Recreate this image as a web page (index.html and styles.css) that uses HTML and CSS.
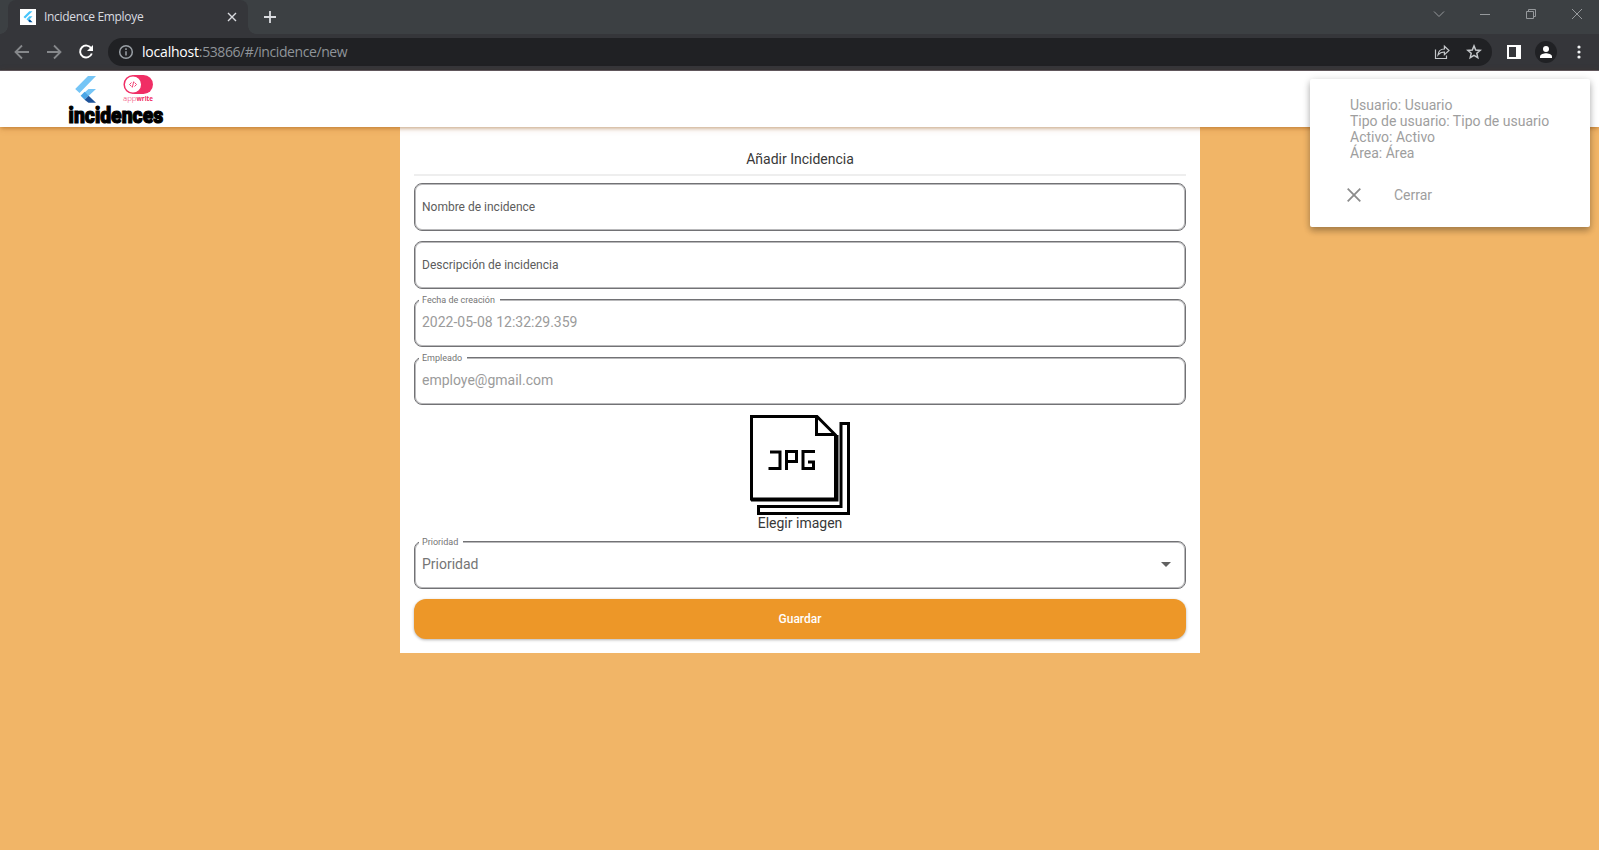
FILE: index.html
```html
<!DOCTYPE html>
<html lang="es">
<head>
<meta charset="utf-8">
<title>Incidence Employe</title>
<link rel="stylesheet" href="styles.css">
</head>
<body>
<div class="browser">
  <div class="tabbar">
    <div class="tab">
      <svg class="favicon" viewBox="0 0 16 16"><path fill="#fff" d="M0 0h16v16H0z"/><path fill="#47c5fb" d="M9.3 2.2h3.2L5.1 9.6 3.5 8zM9.3 7.3h3.2L9.6 10.3 8 8.6z"/><path fill="#47c5fb" d="M6.5 10.2 8.1 8.6l1.6 1.6-1.6 1.6z"/><path fill="#00569e" d="m8.1 11.8 1.6-1.6 2.9 3.1H9.5z"/></svg>
      <span class="tab-title">Incidence Employe</span>
      <svg class="tab-close" viewBox="0 0 10 10"><path d="m1 1 8 8M9 1 1 9"/></svg>
    </div>
    <svg class="new-tab" viewBox="0 0 14 14"><path d="M7 1v12M1 7h12"/></svg>
    <div class="window-buttons">
      <svg viewBox="0 0 12 12"><path d="m1 3.500 5 5 5-5"/></svg>
      <svg viewBox="0 0 12 12"><path d="M1 6.500h10"/></svg>
      <svg viewBox="0 0 12 12"><path d="M1.500 3.500h7v7h-7zM3.500 3.500v-2h7v7h-2"/></svg>
      <svg viewBox="0 0 12 12"><path d="m1 1 10 10M11 1 1 11"/></svg>
    </div>
  </div>
  <div class="toolbar">
    <svg class="nav dim" viewBox="0 0 16 16"><path d="M15 8H2M8 1.500 1.500 8 8 14.500"/></svg>
    <svg class="nav dim" viewBox="0 0 16 16"><path d="M1 8h13M8 1.500 14.500 8 8 14.500"/></svg>
    <svg class="nav" viewBox="0 0 16 16"><path d="M13.300 4.500A6 6 0 1 0 13.800 9.500"/><path class="solid" d="M15 1v6H9z"/></svg>
    <div class="address">
      <svg class="info" viewBox="0 0 16 16"><circle cx="8" cy="8" r="6.300"/><path d="M8 7.200v4.300M8 4.300v1.600"/></svg>
      <span class="url"><b>localhost</b>:53866/#/incidence/new</span>
      <svg class="share" viewBox="0 0 16 16"><path d="M1.500 5.500v9h11v-3M4 11c.4-4 2.800-6 6.400-6V2.200L15 6.500l-4.600 4.200V8C7.500 8 5.500 9 4 11z"/></svg>
      <svg class="star" viewBox="0 0 16 16"><path d="m8 1.900 1.700 4.100 4.500.4-3.400 2.900 1 4.400L8 11.400l-3.800 2.300 1-4.400-3.400-2.900L6.300 6z"/></svg>
    </div>
    <svg class="panel" viewBox="0 0 14 14"><path d="M0 0h14v14H0zM2 2v10h7V2z"/></svg>
    <svg class="profile" viewBox="0 0 22 22"><circle cx="11" cy="11" r="11" fill="#202124"/><circle cx="11" cy="8" r="3" fill="#fff"/><path fill="#fff" d="M5 17v-1.500C5 13 9 12.200 11 12.200s6 .8 6 3.300V17z"/></svg>
    <svg class="dots" viewBox="0 0 4 14"><circle cx="2" cy="2" r="1.600"/><circle cx="2" cy="7" r="1.600"/><circle cx="2" cy="12" r="1.600"/></svg>
  </div>
</div>

<header class="appbar">
  <svg class="logo" viewBox="0 0 100 56" role="img">
    <path fill="#75c5f6" d="M21 5h8L12.500 22l-4.300-4zM21.500 18H29l-7.500 7-4.500-3z"/>
    <path fill="#4aa5e6" d="m13.600 24.700 4-4 4 4-4 4z"/>
    <path fill="#1d5299" d="m17.600 28.700 4-4 7.400 7h-7.500z"/>
    <path fill="#f02e65" d="M66.500 4H76.500a9.500 9.500 0 0 1 0 19h-10z"/>
    <circle cx="66" cy="13.500" r="8.800" fill="#fff" stroke="#f02e65" stroke-width="1.500"/>
    <path fill="none" stroke="#f02e65" stroke-width=".9" d="m64.500 11.500-2 2 2 2m3-4 2 2-2 2m-.8-5-1.400 6"/>
    <text class="appwrite thin" x="56" y="30.300" textLength="13.500" lengthAdjust="spacingAndGlyphs">app</text>
    <text class="appwrite" x="69.500" y="30.300" textLength="16.500" lengthAdjust="spacingAndGlyphs">write</text>
    <text class="brand" x="1.600" y="51.600" textLength="94.500" lengthAdjust="spacingAndGlyphs">incidences</text>
  </svg>
</header>

<main class="card">
  <h1 class="title">Añadir Incidencia</h1>
  <form class="form">
    <div class="field"><span class="placeholder">Nombre de incidence</span></div>
    <div class="field"><span class="placeholder">Descripción de incidencia</span></div>
    <div class="field"><label class="floating">Fecha de creación</label><span class="value">2022-05-08 12:32:29.359</span></div>
    <div class="field"><label class="floating">Empleado</label><span class="value">employe@gmail.com</span></div>
    <div class="picker">
      <svg class="jpg" viewBox="0 0 100 100">
        <path d="M1.500 1.500H67L85.500 20v64h-84zM66.500 2v17.500h18"/>
        <path d="M1 85h86v-65"/>
        <path d="M91 8.500h7.500v90h-90v-7H91z"/>
        <path d="M20 37H30v16.500H18.500M36.500 55V36.500H46.500v10h-10M65 36.500H53v17h10.500V47H58"/>
      </svg>
      <span>Elegir imagen</span>
    </div>
    <div class="field"><label class="floating">Prioridad</label><span class="value select">Prioridad</span><i class="arrow"></i></div>
    <button class="save" type="button">Guardar</button>
  </form>
</main>

<aside class="menu">
  <div class="menu-info">Usuario: Usuario<br>Tipo de usuario: Tipo de usuario<br>Activo: Activo<br>Área: Área</div>
  <div class="menu-close"><svg viewBox="0 0 14 14"><path d="m.7.700 12.600 12.600M13.300.700.700 13.300"/></svg><span>Cerrar</span></div>
</aside>
</body>
</html>
```
FILE: styles.css
```css
* { box-sizing: border-box; }
html, body { margin: 0; height: 850px; overflow: hidden; }
body { background: #f1b567; font-family: Roboto, sans-serif; font-size: 14px; line-height: 16px; color: #383838; }
svg { display: block; flex: none; }

.browser { height: 71px; background: #35363a; border-bottom: 1px solid #5d5962; font-family: "Open Sans", sans-serif; }
.tabbar { height: 34px; background: #3c4043; display: flex; align-items: center; padding-left: 8px; }
.tab { position: relative; width: 240px; height: 34px; background: #35363a; border-radius: 8px 8px 0 0; display: flex; align-items: center; padding: 0 11px 0 12px; }
.tab::before, .tab::after { content: ""; position: absolute; bottom: 0; width: 8px; height: 8px; }
.tab::before { left: -8px; background: radial-gradient(circle at 0 0, #3c4043 7.5px, #35363a 8px); }
.tab::after { right: -8px; background: radial-gradient(circle at 100% 0, #3c4043 7.5px, #35363a 8px); }
.favicon { width: 16px; height: 16px; }
.tab-title { flex: 1; margin-left: 8px; color: #dadce0; font-size: 12px; letter-spacing: -.31px; }
.tab-close { width: 10px; height: 10px; fill: none; stroke: #dadce0; stroke-width: 1.4; }
.new-tab { width: 14px; height: 14px; margin-left: 15px; fill: none; stroke: #dadce0; stroke-width: 1.8; }
.window-buttons { margin-left: auto; display: flex; gap: 34px; padding: 0 16px 6px 0; }
.window-buttons svg { width: 12px; height: 12px; fill: none; stroke: #96999c; stroke-width: 1; }

.toolbar { height: 36px; display: flex; align-items: center; padding: 0 18px 0 14px; }
.nav { width: 16px; height: 16px; margin-right: 16px; fill: none; stroke: #fff; stroke-width: 1.9; }
.nav.dim { stroke: #86888b; stroke-width: 1.8; }
.nav .solid { fill: #fff; stroke: none; }
.address { height: 28px; width: 1384px; margin-left: -2px; border-radius: 14px; background: #202124; display: flex; align-items: center; padding: 0 10px 0 10px; }
.info { width: 16px; height: 16px; fill: none; stroke: #9aa0a6; stroke-width: 1.5; }
.url { flex: 1; margin-left: 8px; font-size: 14px; color: #8f9499; letter-spacing: -.41px; }
.url b { font-weight: 400; color: #fff; letter-spacing: -.2px; }
.share, .star { width: 16px; height: 16px; fill: none; stroke: #c4c7ca; stroke-width: 1.2; }
.share { margin-right: 16px; }
.star { stroke-width: 1.5; }
.panel { width: 14px; height: 14px; margin-left: 15px; fill: #fff; fill-rule: evenodd; }
.profile { width: 22px; height: 22px; margin-left: 14px; }
.dots { width: 4px; height: 14px; margin-left: auto; fill: #f1f3f4; }

.appbar { position: relative; height: 56px; background: #fff; padding-left: 67px; box-shadow: 0 2px 4px -1px rgba(143,70,0,.45), 0 1px 8px rgba(143,70,0,.15); }
.logo { width: 100px; height: 56px; overflow: visible; }
.brand { font: 900 22.500px Roboto, sans-serif; fill: #000; stroke: #000; stroke-width: 1.2; }
.appwrite { font: 700 6.500px "Open Sans", sans-serif; fill: #f02e65; }
.appwrite.thin { font-weight: 300; }

.card { width: 800px; height: 526px; margin: 0 auto 0 400px; padding: 24px 14px 14px; background: #fff; }
.title { margin: 0; height: 25px; border-bottom: 2px solid #eee; font-size: 14px; font-weight: 400; line-height: 16px; text-align: center; }
.form { display: flex; flex-direction: column; gap: 10px; margin-top: 7px; }
.field { position: relative; height: 48px; border: 1px solid #727275; border-radius: 8px; box-shadow: inset 0 0 0 1px #b9b9bb; display: flex; align-items: center; padding: 0 7px 2px; }
.placeholder { font-size: 12px; color: #5c5c5c; padding-top: 2px; }
.value { color: #9b9b9b; }
.value.select { color: #757575; }
.floating { position: absolute; top: -5px; left: 4px; padding: 0 5px 0 3px; background: #fff; color: #757575; font-size: 9px; line-height: 11px; }
.arrow { margin-left: auto; margin-right: 7px; border: 5px solid transparent; border-top-color: #616161; border-bottom: 0; }
.picker { display: flex; flex-direction: column; align-items: center; }
.jpg { width: 100px; height: 100px; fill: none; stroke: #000; stroke-width: 3; }
.save { height: 40px; border: 0; border-radius: 12px; background: #ed9728; box-shadow: 0 1px 3px rgba(0,0,0,.3); color: #fff; font: 500 12px Roboto, sans-serif; }

.menu { position: absolute; left: 1310px; top: 79px; width: 280px; height: 148px; padding: 18px 40px 0; background: #fff; border-radius: 2px; box-shadow: 0 4px 6px rgba(0,0,0,.24), 0 1px 8px rgba(0,0,0,.14); color: #9e9e9e; white-space: nowrap; }
.menu-close { display: flex; align-items: center; gap: 33px; margin: 26px 0 0 -3px; }
.menu-close svg { width: 14px; height: 14px; fill: none; stroke: #8c8c8c; stroke-width: 1.8; }
```
